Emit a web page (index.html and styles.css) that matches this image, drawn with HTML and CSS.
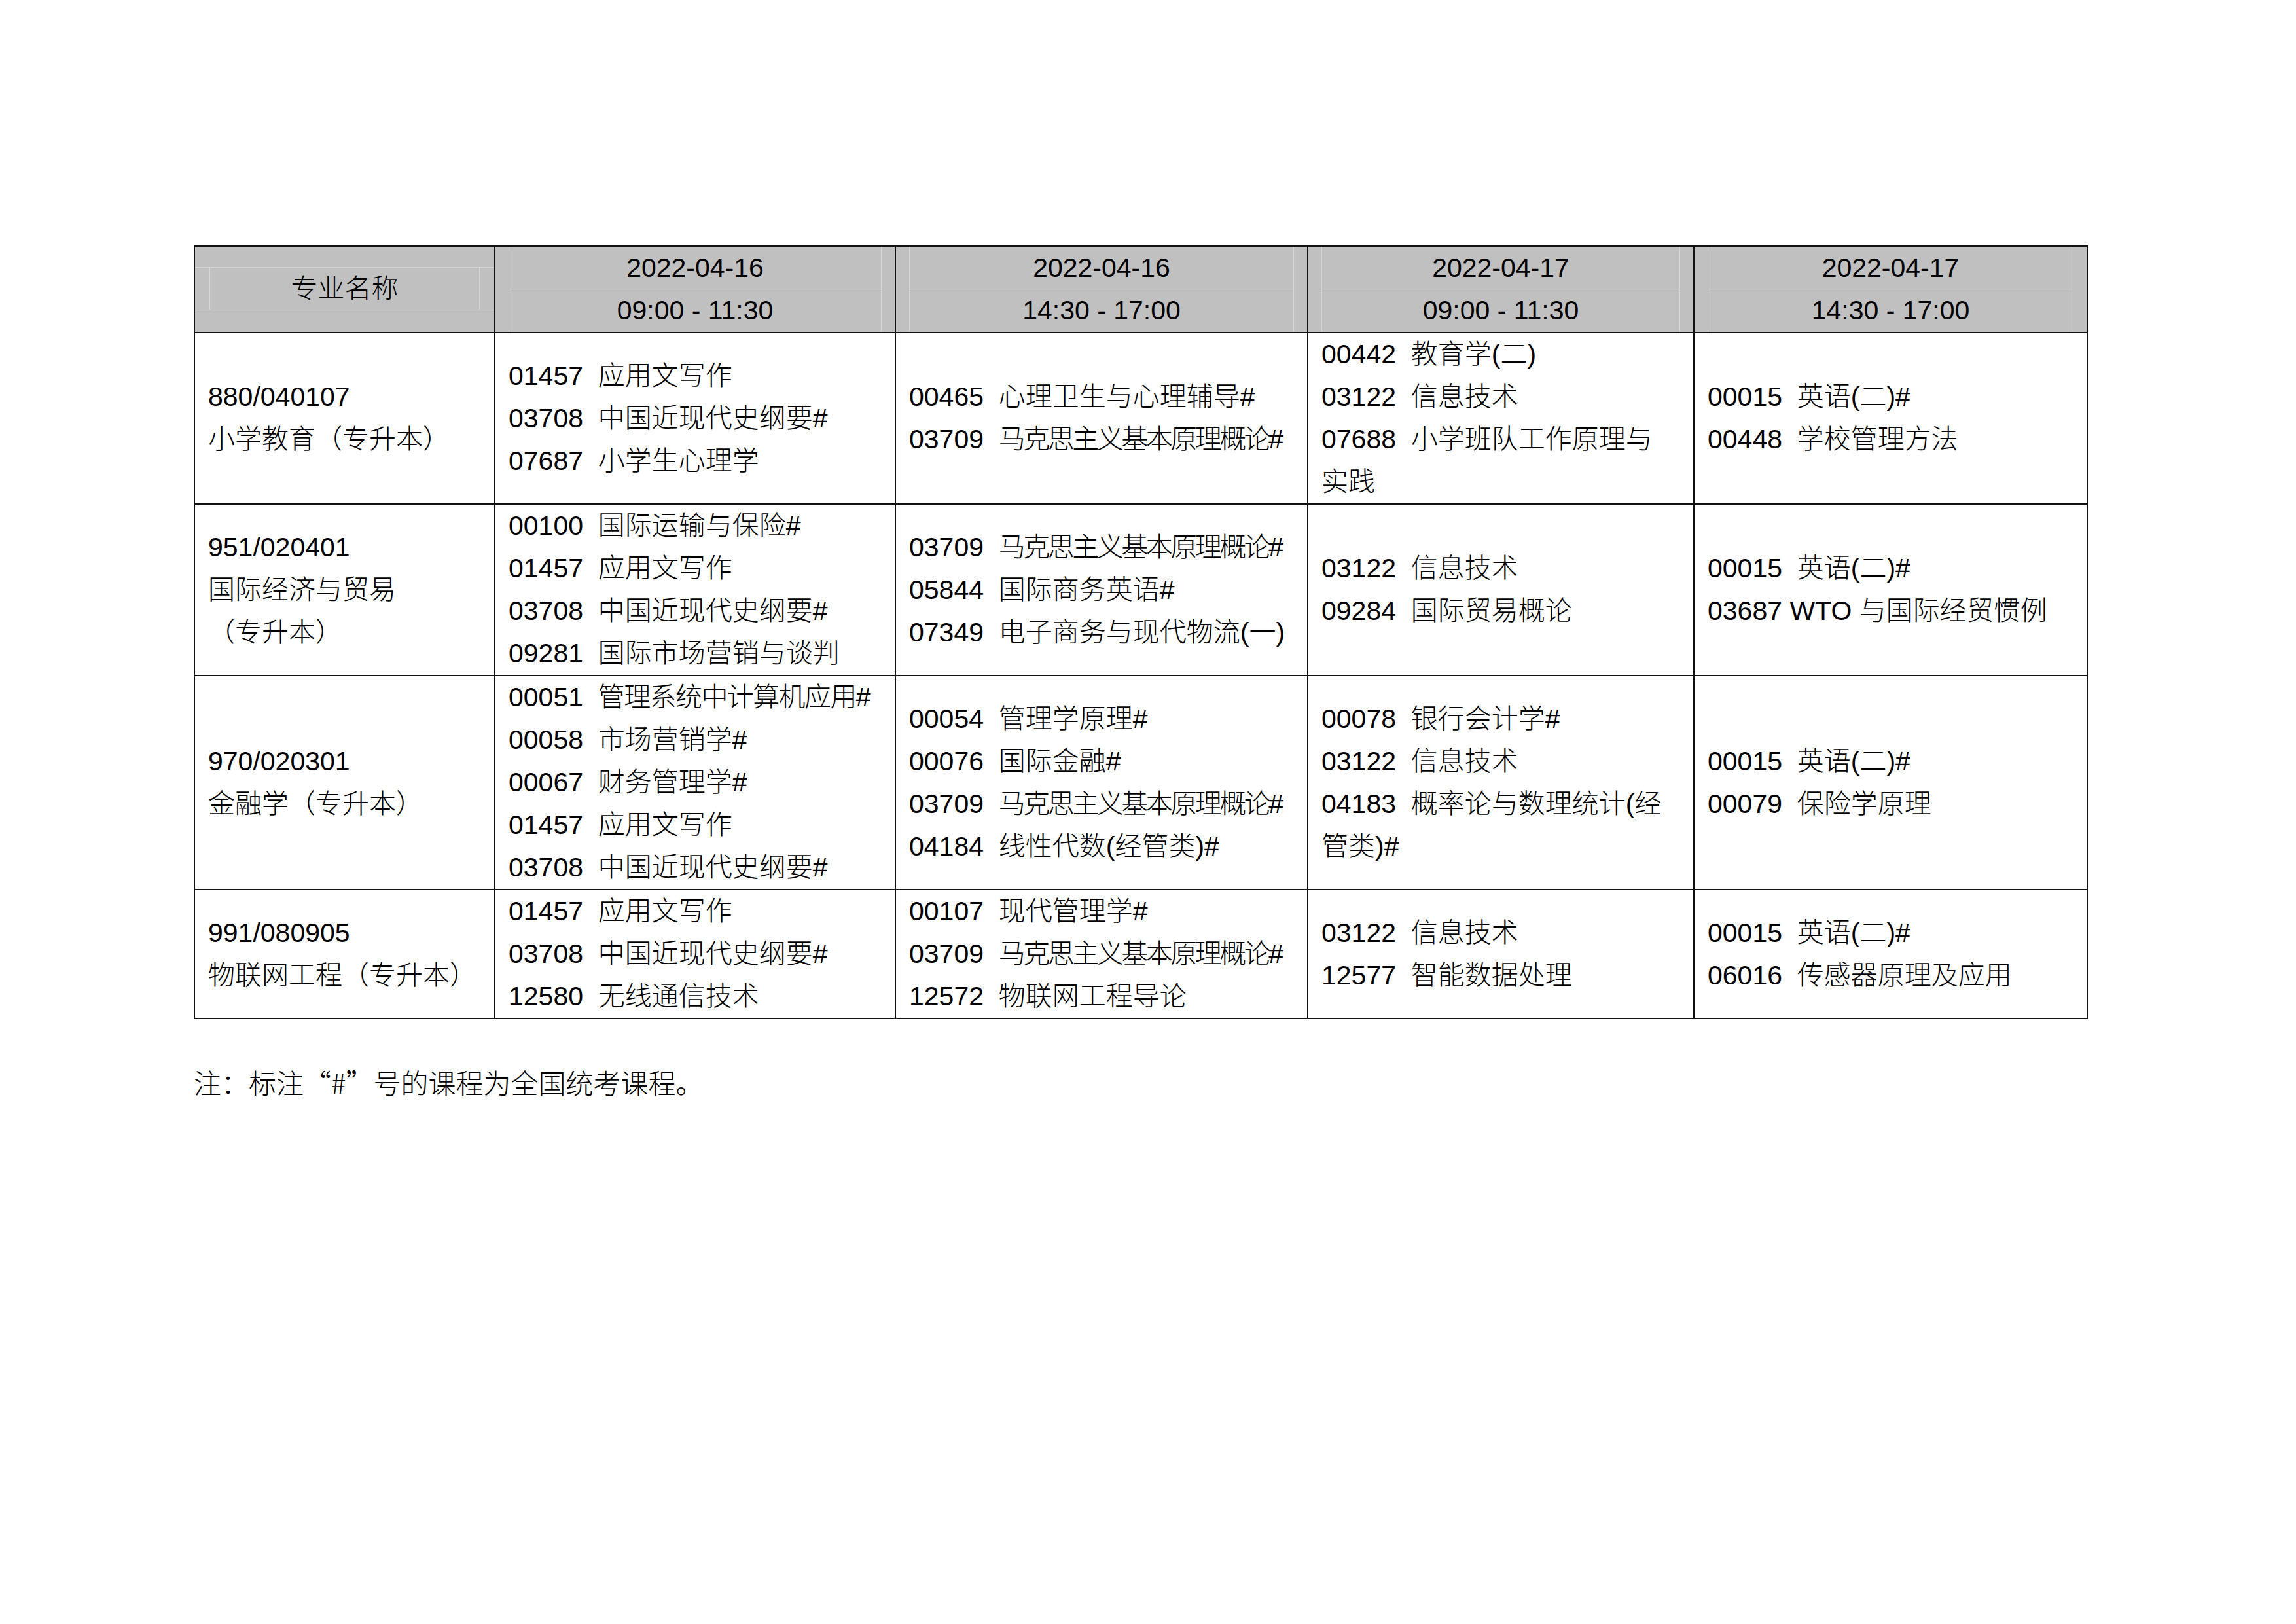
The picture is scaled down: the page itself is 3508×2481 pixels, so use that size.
FILE: index.html
```html
<!DOCTYPE html>
<html lang="zh-CN">
<head>
<meta charset="utf-8">
<title>考试安排</title>
<link rel="stylesheet" href="styles.css">
</head>
<body>
<div class="page">
  <table class="sched">
    <colgroup>
      <col class="c1"><col class="c2"><col class="c3"><col class="c4"><col class="c5">
    </colgroup>
    <thead>
      <tr>
        <th class="hname">
          <div class="nframe"><div class="ninner">专业名称</div></div>
        </th>
        <th class="hdate"><div class="dframe"><div class="dl first">2022-04-16</div><div class="dl">09:00 - 11:30</div></div></th>
        <th class="hdate"><div class="dframe"><div class="dl first">2022-04-16</div><div class="dl">14:30 - 17:00</div></div></th>
        <th class="hdate"><div class="dframe"><div class="dl first">2022-04-17</div><div class="dl">09:00 - 11:30</div></div></th>
        <th class="hdate"><div class="dframe"><div class="dl first">2022-04-17</div><div class="dl">14:30 - 17:00</div></div></th>
      </tr>
    </thead>
    <tbody>
      <tr>
        <td><div class="ln">880/040107</div><div class="ln">小学教育（专升本）</div></td>
        <td><div class="ln">01457  应用文写作</div><div class="ln">03708  中国近现代史纲要#</div><div class="ln">07687  小学生心理学</div></td>
        <td><div class="ln">00465  心理卫生与心理辅导#</div><div class="ln">03709  <span class="sq-a">马克思主义基本原理概论#</span></div></td>
        <td><div class="ln">00442  教育学(二)</div><div class="ln">03122  信息技术</div><div class="ln">07688  小学班队工作原理与</div><div class="ln">实践</div></td>
        <td><div class="ln">00015  英语(二)#</div><div class="ln">00448  学校管理方法</div></td>
      </tr>
      <tr>
        <td><div class="ln">951/020401</div><div class="ln">国际经济与贸易</div><div class="ln">（专升本）</div></td>
        <td><div class="ln">00100  国际运输与保险#</div><div class="ln">01457  应用文写作</div><div class="ln">03708  中国近现代史纲要#</div><div class="ln">09281  国际市场营销与谈判</div></td>
        <td><div class="ln">03709  <span class="sq-a">马克思主义基本原理概论#</span></div><div class="ln">05844  国际商务英语#</div><div class="ln">07349  电子商务与现代物流(一)</div></td>
        <td><div class="ln">03122  信息技术</div><div class="ln">09284  国际贸易概论</div></td>
        <td><div class="ln">00015  英语(二)#</div><div class="ln">03687 WTO 与国际经贸惯例</div></td>
      </tr>
      <tr>
        <td><div class="ln">970/020301</div><div class="ln">金融学（专升本）</div></td>
        <td><div class="ln">00051  <span class="sq-b">管理系统中计算机应用#</span></div><div class="ln">00058  市场营销学#</div><div class="ln">00067  财务管理学#</div><div class="ln">01457  应用文写作</div><div class="ln">03708  中国近现代史纲要#</div></td>
        <td><div class="ln">00054  管理学原理#</div><div class="ln">00076  国际金融#</div><div class="ln">03709  <span class="sq-a">马克思主义基本原理概论#</span></div><div class="ln">04184  线性代数(经管类)#</div></td>
        <td><div class="ln">00078  银行会计学#</div><div class="ln">03122  信息技术</div><div class="ln">04183  概率论与数理统计(经</div><div class="ln">管类)#</div></td>
        <td><div class="ln">00015  英语(二)#</div><div class="ln">00079  保险学原理</div></td>
      </tr>
      <tr>
        <td><div class="ln">991/080905</div><div class="ln">物联网工程（专升本）</div></td>
        <td><div class="ln">01457  应用文写作</div><div class="ln">03708  中国近现代史纲要#</div><div class="ln">12580  无线通信技术</div></td>
        <td><div class="ln">00107  现代管理学#</div><div class="ln">03709  <span class="sq-a">马克思主义基本原理概论#</span></div><div class="ln">12572  物联网工程导论</div></td>
        <td><div class="ln">03122  信息技术</div><div class="ln">12577  智能数据处理</div></td>
        <td><div class="ln">00015  英语(二)#</div><div class="ln">06016  传感器原理及应用</div></td>
      </tr>
    </tbody>
  </table>
  <p class="note">注：标注“#”号的课程为全国统考课程。</p>
</div>
</body>
</html>
```

FILE: styles.css
```css
html, body {
  margin: 0;
  padding: 0;
  background: #ffffff;
}

.page {
  padding: 375px 0 0 296px;
  font-family: "Liberation Sans", "Noto Sans CJK SC", sans-serif;
  color: #000000;
}

.sched {
  border-collapse: collapse;
  table-layout: fixed;
  width: 2894px;
  font-size: 41px;
  font-weight: 300;
}

.c1 { width: 459px; }
.c2 { width: 612px; }
.c3 { width: 630px; }
.c4 { width: 590px; }
.c5 { width: 601px; }

.sched th,
.sched td {
  border: 2px solid #111111;
  padding: 0 0 0 20px;
  vertical-align: middle;
  text-align: left;
}

.sched thead th {
  background: #c0c0c0;
  font-weight: 300;
  height: 130px;
  padding: 0;
  vertical-align: top;
}

.sched thead th.hdate {
  padding: 0 20px;
}

.dframe {
  height: 130px;
  border-left: 1px solid #d6d6d6;
  border-right: 1px solid #d6d6d6;
  text-align: center;
}

.dl {
  height: 65px;
  line-height: 65px;
  white-space: nowrap;
}

.dl.first {
  height: 64px;
  border-bottom: 1px solid #d6d6d6;
}

.nframe {
  margin-top: 31px;
  border-top: 1px solid #d6d6d6;
  border-bottom: 1px solid #d6d6d6;
}

.ninner {
  margin: 0 22px;
  height: 64px;
  line-height: 64px;
  border-left: 1px solid #d6d6d6;
  border-right: 1px solid #d6d6d6;
  text-align: center;
}

.ln {
  height: 65px;
  line-height: 65px;
  white-space: pre;
}

/* names squeezed to fit the cell, as in the source document */
.sq-a {
  letter-spacing: -3.5px;
}

.sq-b {
  letter-spacing: -1.6px;
}

.note {
  margin: 66px 0 0 0;
  font-family: "Noto Sans CJK SC", sans-serif;
  font-size: 42px;
  font-weight: 300;
  line-height: 60px;
}
```
